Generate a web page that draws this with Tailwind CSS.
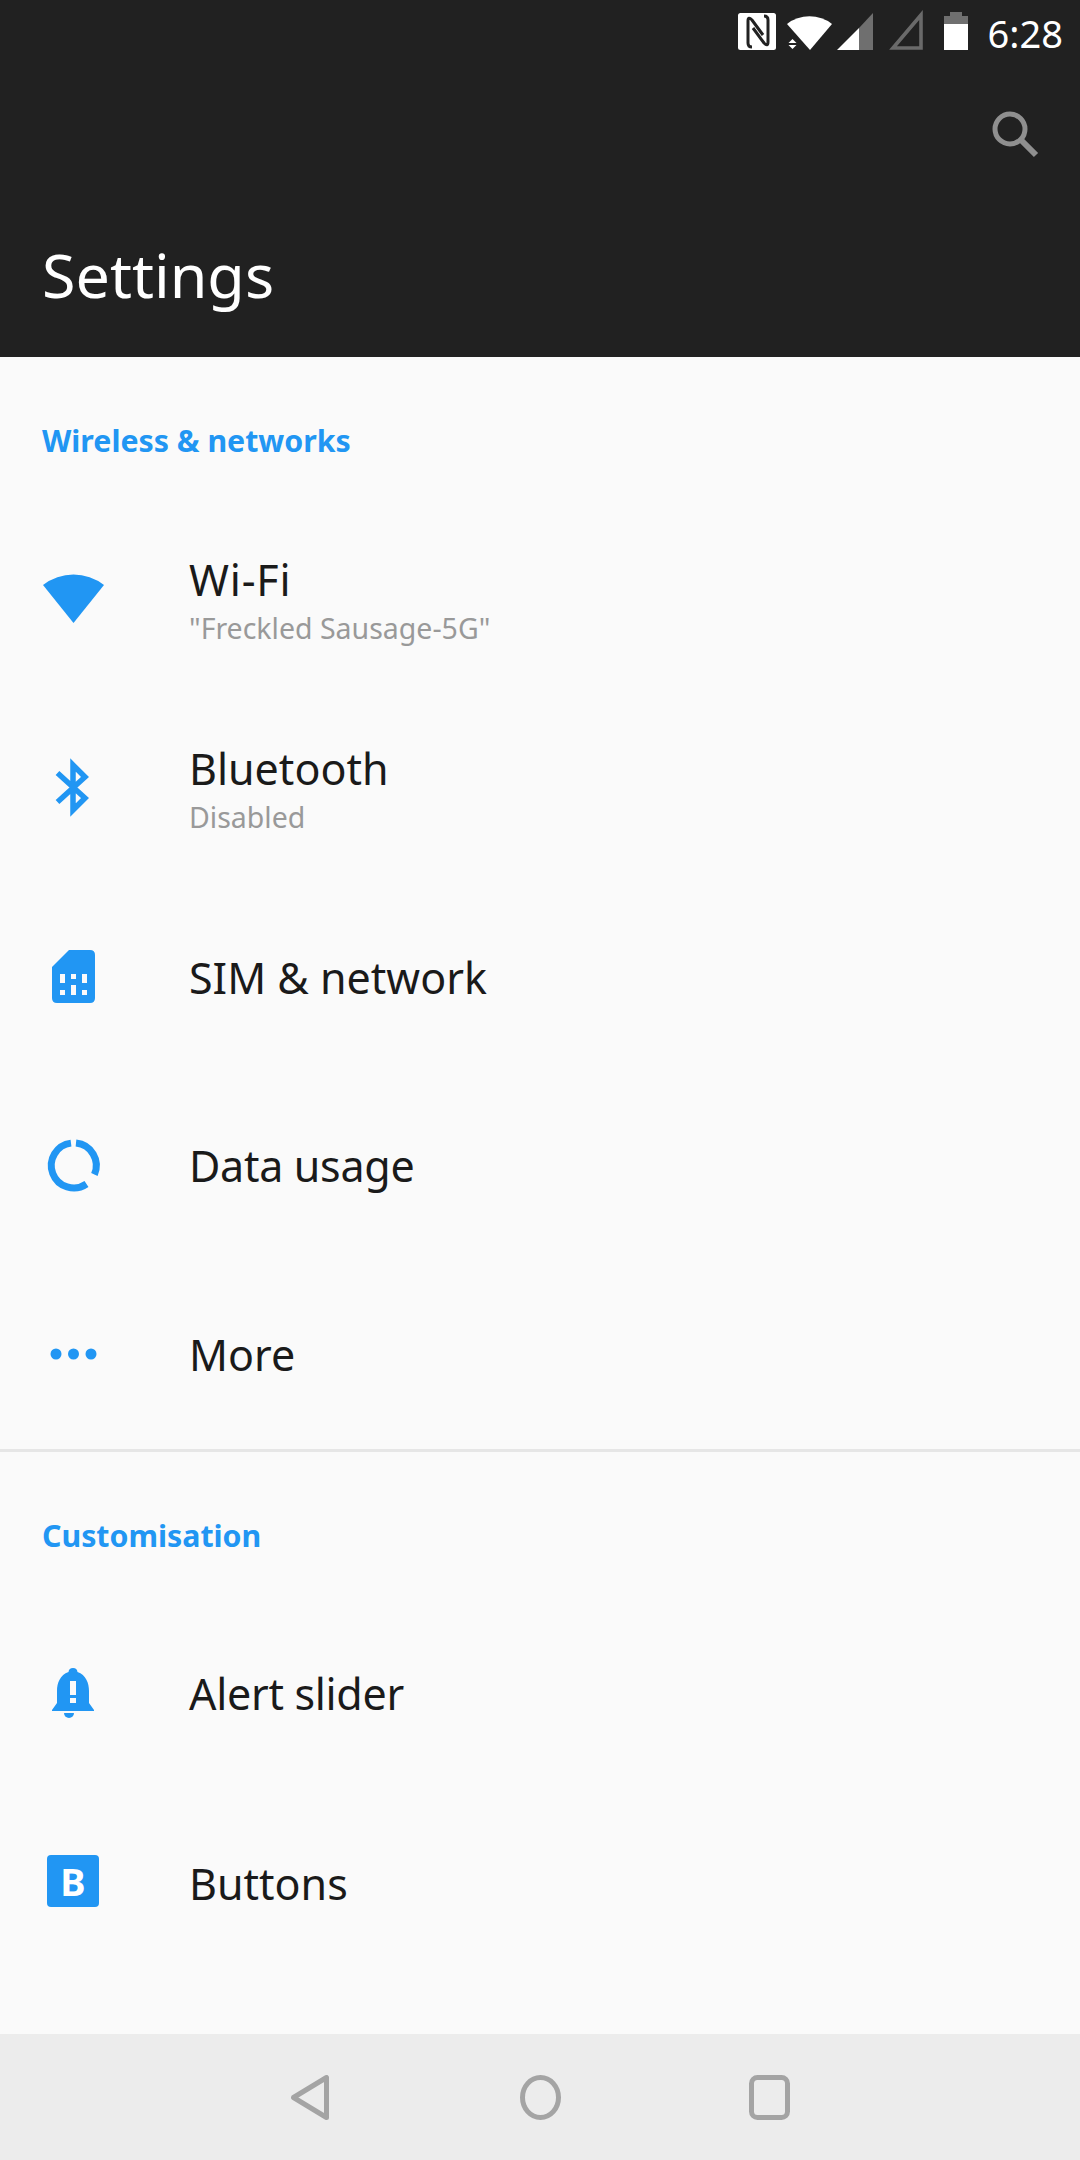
<!DOCTYPE html>
<html><head><meta charset="utf-8"><script src="https://cdn.jsdelivr.net/npm/@tailwindcss/browser@4"></script></head>
<body class="w-[1080px] h-[2160px] overflow-hidden bg-[#fafafa] font-['Noto_Sans',sans-serif]">
<div class="flex flex-col h-[2160px]">
<header class="h-[357px] bg-[#212121] flex flex-col shrink-0">
  <div class="h-[66px] flex items-center justify-end pr-[17px]">
    <svg width="258" height="66" viewBox="730 0 258 66">
      <rect x="738" y="13" width="38" height="37" rx="2.5" fill="#fff"/>
      <path d="M752,47 Q748,47 748,43 V21 Q748,16 752,20 L763,35" fill="none" stroke="#212121" stroke-width="3"/>
      <path d="M764,16 Q768,16 768,20 V42 Q768,47 764,43 L753,28" fill="none" stroke="#212121" stroke-width="3"/>
      <path d="M787,24 A37 37 0 0 1 832,24 L810,50 Z" fill="#fff"/>
      <path d="M792.5,39 L796.5,43 H788.5 Z M788.5,45 H796.5 L792.5,49 Z" fill="#fff"/>
      <path d="M837,50 L859,28 V50 Z" fill="#fff"/>
      <path d="M859,28 L873,13 V50 H859 Z" fill="#6f6f6f"/>
      <path d="M893,48 L921,15 V48 Z" fill="none" stroke="#6a6a6a" stroke-width="3.6"/>
      <path d="M944,16 H950 V12 H962 V16 H968 V24 H944 Z" fill="#6f6f6f"/>
      <rect x="944" y="24" width="24" height="26" fill="#fff"/>
    </svg>
    <span class="text-[38px] leading-[44px] text-white">6:28</span>
  </div>
  <div class="flex justify-end pr-[41px] pt-[45px]">
    <svg width="47" height="47" viewBox="992 111 47 47" fill="none" stroke="#8f8f8f"><circle cx="1010" cy="129" r="15" stroke-width="5"/><path d="M1021,140 L1036,155" stroke-width="6"/></svg>
  </div>
  <div class="pl-[42px] mt-[81px] text-[61px] leading-[72px] text-white">Settings</div>
</header>
<main class="flex-1 overflow-hidden">
  <section class="border-b-[3px] border-[#e6e6e6]">
    <h2 class="h-[148px] pl-[42px] pt-[62px] text-[30.3px] leading-[44px] font-bold text-[#2196f3]">Wireless &amp; networks</h2>
    <div class="h-[189px] flex items-center pl-[43px]">
      <svg class="w-[146px] shrink-0" width="62" height="61" viewBox="43 569 146 61" preserveAspectRatio="xMinYMid"><path d="M43,585 A50 50 0 0 1 104,585 L73.5,623 Z" fill="#2196f3"/></svg>
      <div class="mt-[1px]"><div class="text-[43px] leading-[56px] tracking-[0.8px] text-[#1a1a1a]">Wi-Fi</div><div class="text-[28.5px] leading-[41px] text-[#999999]">"Freckled Sausage-5G"</div></div>
    </div>
    <div class="h-[189px] flex items-center pl-[43px]">
      <svg class="w-[146px] shrink-0" width="62" height="61" viewBox="43 758 146 61" preserveAspectRatio="xMinYMid"><path d="M57.5,773 L85,798 L73,810 V765 L85,777 L57.5,802" fill="none" stroke="#2196f3" stroke-width="5.5"/></svg>
      <div class="mt-[1px]"><div class="text-[43px] leading-[56px] text-[#1a1a1a]">Bluetooth</div><div class="text-[28.5px] leading-[41px] text-[#999999]">Disabled</div></div>
    </div>
    <div class="h-[189px] flex items-center pl-[43px]">
      <svg class="w-[146px] shrink-0" width="62" height="61" viewBox="43 947 146 61" preserveAspectRatio="xMinYMid">
        <path d="M69,950 H90 Q95,950 95,955 V998 Q95,1003 90,1003 H57 Q52,1003 52,998 V967 Z" fill="#2196f3"/>
        <path d="M60,974 H65 V983 H60 Z M71,974 H76 V979 H71 Z M82,974 H87 V983 H82 Z M60,990 H65 V995 H60 Z M71,985 H76 V995 H71 Z M82,990 H87 V995 H82 Z" fill="#fafafa"/>
      </svg>
      <div class="text-[43px] leading-[56px] text-[#1a1a1a]">SIM &amp; network</div>
    </div>
    <div class="h-[189px] flex items-center pl-[43px]">
      <svg class="w-[146px] shrink-0" width="62" height="61" viewBox="43 1136 146 61" preserveAspectRatio="xMinYMid">
        <path d="M76,1143.1 A22.5 22.5 0 0 1 94.4,1174.5 M86.5,1184 A22.5 22.5 0 1 1 71,1143.1" fill="none" stroke="#2196f3" stroke-width="7"/>
      </svg>
      <div class="-mt-[2px] text-[43px] leading-[56px] tracking-[-0.3px] text-[#1a1a1a]">Data usage</div>
    </div>
    <div class="h-[188px] flex items-center pl-[43px]">
      <svg class="w-[146px] shrink-0" width="62" height="61" viewBox="43 1325 146 61" preserveAspectRatio="xMinYMid">
        <circle cx="56" cy="1354" r="5.5" fill="#2196f3"/><circle cx="73.5" cy="1354" r="5.5" fill="#2196f3"/><circle cx="91" cy="1354" r="5.5" fill="#2196f3"/>
      </svg>
      <div class="-mt-[1px] text-[43px] leading-[56px] text-[#1a1a1a]">More</div>
    </div>
  </section>
  <section>
    <h2 class="h-[148px] pl-[42px] pt-[62px] text-[30.3px] leading-[44px] font-bold text-[#2196f3]">Customisation</h2>
    <div class="h-[189px] flex items-center pl-[43px]">
      <svg class="w-[146px] shrink-0" width="62" height="61" viewBox="43 1665 146 61" preserveAspectRatio="xMinYMid">
        <path d="M73,1669 A4.5 4.5 0 0 1 77.5,1673 C86,1676 89,1684 89,1692 V1704 L94,1711 V1712 H52 V1711 L57,1704 V1692 C57,1684 60,1676 68.5,1673 A4.5 4.5 0 0 1 73,1669 Z" fill="#2196f3"/>
        <path d="M64,1714 H74 A5 5 0 0 1 64,1714 Z" fill="#2196f3"/>
        <path d="M70,1682 H76 V1696 H70 Z M70,1699 H76 V1704 H70 Z" fill="#fafafa"/>
      </svg>
      <div class="-mt-[2px] text-[43px] leading-[56px] tracking-[-0.3px] text-[#1a1a1a]">Alert slider</div>
    </div>
    <div class="h-[189px] flex items-center pl-[43px]">
      <div class="w-[146px] shrink-0 -mt-[5px]"><div class="w-[52px] h-[52px] ml-[4px] rounded-[4px] bg-[#2196f3] flex items-center justify-center text-white text-[38px] leading-[40px] font-bold">B</div></div>
      <div class="text-[43px] leading-[56px] text-[#1a1a1a]">Buttons</div>
    </div>
  </section>
</main>
<nav class="h-[126px] shrink-0 bg-[#ececec] flex items-center pl-[291px]">
  <svg width="38" height="45" viewBox="291 2080 38 45" fill="none" stroke="#a4a4a4" stroke-width="5" stroke-linejoin="round"><path d="M293.5,2102.5 L326.5,2082.5 V2122.5 Z"/></svg>
  <svg class="ml-[191px]" width="41" height="45" viewBox="520 2080 41 45" fill="none" stroke="#a4a4a4" stroke-width="5"><ellipse cx="540.5" cy="2102.5" rx="18" ry="20"/></svg>
  <svg class="ml-[188px]" width="41" height="45" viewBox="749 2080 41 45" fill="none" stroke="#a4a4a4" stroke-width="5"><rect x="751.5" y="2082.5" width="36" height="40" rx="6"/></svg>
</nav>
</div>
</body></html>
